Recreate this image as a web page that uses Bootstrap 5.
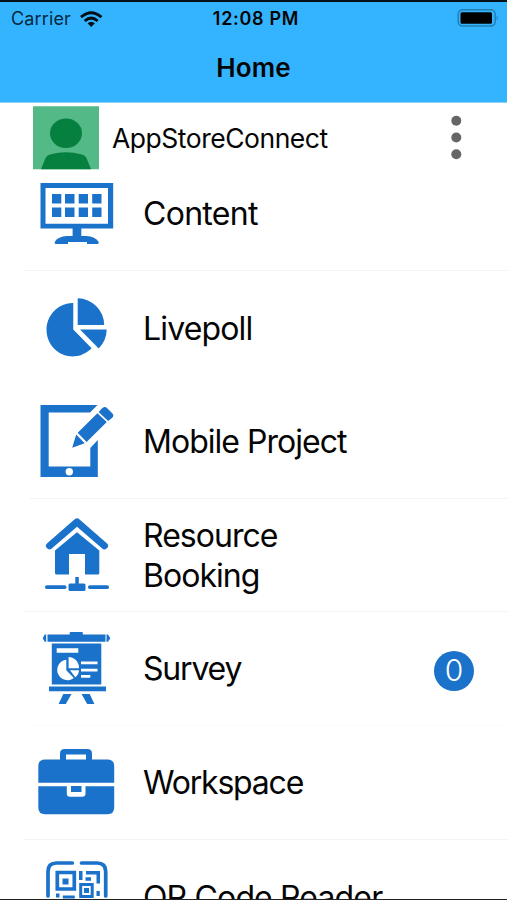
<!DOCTYPE html>
<html lang="en">
<head>
<meta charset="utf-8">
<meta name="viewport" content="width=device-width, initial-scale=1">
<title>Home</title>
<link href="https://cdn.jsdelivr.net/npm/bootstrap@5.3.0/dist/css/bootstrap.min.css" rel="stylesheet">
<style>
body{font-family:Inter,"Liberation Sans",sans-serif;color:#050505;height:900px}
.screen{width:507px;height:900px;border-top:2px solid #04121c;border-bottom:1px solid #222}
.app-head{background:#34b4ff;height:101px;border-bottom:1px solid #8fd0f5}
.status{height:32px;padding:1px 8px 0 11px;font-size:18px;line-height:32px}
.status>*{flex:1 1 0}
.carrier{color:#06283c;font-size:18px;letter-spacing:.15px}
.clock{font-weight:600;font-size:18px;letter-spacing:.7px;padding-left:2px}
.head-title{font-size:26px;font-weight:600;line-height:68px;letter-spacing:.1px}
.profile{height:69px;padding-left:33px}
.profile-name{font-size:26.5px;letter-spacing:-.48px;margin-left:13px;padding-top:2px}
.entry{height:114px;padding-left:30px}
.entry.first{height:99px}
.entry.short{height:113px}
.entry-label{font-size:32px;line-height:40px;margin-left:23px;padding-top:1px;letter-spacing:-.97px}
.entry-label.loose{letter-spacing:-.7px}
.entry-label.medium{letter-spacing:-.85px}
.entry-label.snug{letter-spacing:-1.2px}
.entry.first .entry-label{margin-bottom:15px}
.rule{height:1px;background:#f3f3f3}
.rule.wide{margin-left:-6px}
.rule.faint{background:#fbfbfb}
.count{width:40px;height:40px;margin:4px 33px 0 0;background:#1a72ca;font-size:30px;font-weight:300}
.ico{fill:#1a72ca}
.ico .w{fill:#fff}
</style>
<script src="https://cdn.jsdelivr.net/npm/bootstrap@5.3.0/dist/js/bootstrap.bundle.min.js"></script>
</head>
<body class="bg-white overflow-hidden">
<main class="screen d-flex flex-column overflow-hidden">
<header class="app-head flex-shrink-0">
  <div class="status d-flex align-items-center">
    <div class="carrier d-flex align-items-center"><span>Carrier</span>
      <svg class="ms-2" width="24" height="18" viewBox="79 8 24 18" fill="none" stroke="#031018" stroke-width="3"><path d="M81 15.2Q91.200 6.400 101.400 15.200"/><path d="M84.700 19Q91.200 13.200 97.700 19"/><path d="M91.200 25L87.500 21.300Q91.200 18.300 94.900 21.300Z" fill="#031018" stroke="none"/></svg>
    </div>
    <div class="clock text-center text-nowrap">12:08 PM</div>
    <div class="d-flex justify-content-end">
      <svg width="42" height="20" viewBox="457.500 8.500 42 20"><rect x="458.700" y="9.200" width="37" height="16.400" rx="4.500" fill="none" stroke="#237eb4" stroke-width="1.500"/><rect x="461" y="11.800" width="31.500" height="11.500" rx="1.500"/><path d="M497.200 15q2.300 2.500 0 5z" fill="#237eb4"/></svg>
    </div>
  </div>
  <h1 class="head-title text-center m-0">Home</h1>
</header>
<section class="profile d-flex flex-shrink-0">
  <svg class="flex-shrink-0" width="66" height="69" viewBox="33 103 66 69"><path fill="#53b987" d="M33 106.300h66v62.900H33z"/><ellipse cx="66" cy="133.200" rx="16" ry="14.800" fill="#06803e"/><path fill="#06803e" d="M41 169.200L45.500 158Q47 155 51 154.200Q66 150.500 81 154.200Q85 155 86.500 158L91 169.200z"/></svg>
  <span class="profile-name align-self-center">AppStoreConnect</span>
  <svg class="ms-auto" width="82" height="69" viewBox="425 103 82 69" fill="#666"><circle cx="456.300" cy="120.800" r="5"/><circle cx="456.300" cy="137.500" r="5"/><circle cx="456.300" cy="154.200" r="5"/></svg>
</section>
<nav class="flex-shrink-0">
  <div class="entry first d-flex flex-column">
    <div class="d-flex align-items-center flex-grow-1">
      <svg class="ico" width="90" height="98" viewBox="30 172 90 98"><path fill-rule="evenodd" d="M40.500 183h72.700v45.500H40.500zM45.500 188v35.800h62.500V188z"/><path d="M52 194h9.300v9.500H52zM65 194h9.500v9.500H65zM78.700 194H88v9.500h-9.300zM92.200 194h9.300v9.500h-9.300zM52 207.500h9.300v9.500H52zM65 207.500h9.500v9.500H65zM78.700 207.500H88v9.500h-9.300zM92.200 207.500h9.300v9.500h-9.300zM72.600 228h8.700v8h5q9 .5 12.400 6Q99 244 97.500 244H87v-2H68v2H56Q54 244 55 241.500Q58 236.500 67 236h5.600z"/></svg>
      <span class="entry-label loose">Content</span>
    </div><div class="rule wide"></div>
  </div>
  <div class="entry d-flex align-items-center">
    <svg class="ico" width="90" height="114" viewBox="30 271 90 114"><path d="M73 303V329.500L91.700 348.200A26.700 26.700 0 1 1 73 303z" transform="translate(1.500 0) scale(.983 1)"/><path d="M77.700 298.200A27 27 0 0 1 104.200 325H77.700zM80 329.500h26.700Q106.500 340.500 98.700 348.500z"/></svg>
    <span class="entry-label medium">Livepoll</span>
  </div>
  <div class="entry d-flex flex-column">
    <div class="d-flex align-items-center flex-grow-1">
      <svg class="ico" width="90" height="113" viewBox="30 385 90 113"><path fill-rule="evenodd" d="M40.500 405h57l-7.500 7.500H48.700v54H90.300V448l7.500-8v37H40.500z"/><circle class="w" cx="69.300" cy="471.800" r="3.700"/><path d="M72.200 447.800L76.200 434.500L84.700 443.300zM77.700 432.800L97.400 413.200L106.800 422L86.600 442zM98.700 411.900L101.800 408.500Q104.500 405.500 107.500 408.400L112 413Q114.700 415.500 112 418L108.100 420.900z"/></svg>
      <span class="entry-label">Mobile Project</span>
    </div><div class="rule"></div>
  </div>
  <div class="entry short d-flex flex-column">
    <div class="d-flex align-items-center flex-grow-1">
      <svg class="ico" width="90" height="112" viewBox="30 499 90 112"><path d="M49.500 545.800L77 522L104.500 545.800" fill="none" stroke="#1a72ca" stroke-width="7" stroke-linecap="round" stroke-linejoin="round"/><path d="M55 550.500L77 532.200L99.300 550.500V573q0 1.500-1.500 1.500H85V554H69v20.500H56.500Q55 574.500 55 573zM75.300 577h3.500v6.500H84q1.500 0 1.500 1.500v4.500q0 1.500-1.500 1.500H70q-1.500 0-1.500-1.500V585q0-1.500 1.500-1.500h5.300z"/><rect x="45" y="585.300" width="21.500" height="3.700" rx="1.800"/><rect x="88" y="585.300" width="21" height="3.700" rx="1.800"/></svg>
      <span class="entry-label">Resource<br>Booking</span>
    </div><div class="rule wide"></div>
  </div>
  <div class="entry d-flex flex-column">
    <div class="d-flex align-items-center flex-grow-1">
      <svg class="ico" width="90" height="113" viewBox="30 612 90 113"><path d="M47.500 634.500H69.700v-1.700q0-.8.800-.8H82q.8 0 .8.800v1.700h22.700v7.200h-58zM46.200 634.500v7.200h-1.500L42.700 638.200L44.700 634.500zM106.500 634.500h1.500l2.300 3.700l-2.300 3.500h-1.500zM51.800 643.500h49.500v41H51.800zM49 686.500h57v4.800H49zM63.300 694h8.200L65.800 704h-7.200zM81.500 694h8.200l4.700 10h-7.200z"/><path class="w" d="M56.700 648.300h21.600v4.500H56.700zM66.300 659.800v10.400l7.500 7.700A10.200 10.200 0 1 1 66.300 659.800zM68.600 657A10.700 10.700 0 0 1 79 668.300H68.600zM70 670.300h9Q79 674.500 75.300 677.200zM81 661.500h16.500v2.700H81zM81 668.700h16.500v2.700H81zM81 675h9.300v2.700H81z"/></svg>
      <span class="entry-label snug">Survey</span>
      <span class="count ms-auto rounded-circle text-white d-flex align-items-center justify-content-center">0</span>
    </div><div class="rule faint"></div>
  </div>
  <div class="entry d-flex flex-column">
    <div class="d-flex align-items-center flex-grow-1">
      <svg class="ico" width="90" height="113" viewBox="30 726 90 113"><path fill-rule="evenodd" d="M60 759.500v-6q0-4.500 4.500-4.500h23q4.500 0 4.500 4.500v6h15.500q6.700 0 6.700 6.700v16.500H38.300v-16.500q0-6.700 6.700-6.700zM66 754.500v5h20v-5z"/><path d="M38.300 786.300H114.200V807.500q0 6.700-6.700 6.700H45q-6.700 0-6.700-6.700z"/><path class="w" d="M66.800 785h18.700v8.500q0 3.300-3.300 3.300H70q-3.200 0-3.200-3.300z"/><path d="M71 786h10.500v6H71z"/></svg>
      <span class="entry-label snug">Workspace</span>
    </div><div class="rule wide"></div>
  </div>
  <div class="entry d-flex align-items-center">
    <svg class="ico" width="90" height="114" viewBox="30 840 90 114"><g fill="none" stroke="#1a72ca" stroke-width="3.700" stroke-linecap="round"><path d="M48 896V871.500Q48 863 56.500 863H72.300M81.500 863H97Q105.700 863 105.700 871.500V896"/><path stroke-linecap="butt" d="M57.300 872.500h17v16.500h-17z"/></g><path d="M62.500 878.500h6v6h-6zM79 871h3.500v9H79zM86 871h14v12.500h-3.500v-9H86zM85.500 877.300H91v3.500h-5.500zM96.500 891h3.300v5h-3.300zM56 893.500h3.500v4H56zM62.800 895.500h12v3h-12z"/><path fill="none" stroke="#1a72ca" stroke-width="3" d="M80.700 884.500h11.500v12H80.700z"/><path d="M84 888h5v5h-5z"/></svg>
    <span class="entry-label medium text-nowrap">QR Code Reader</span>
  </div>
</nav>
</main>
</body>
</html>
